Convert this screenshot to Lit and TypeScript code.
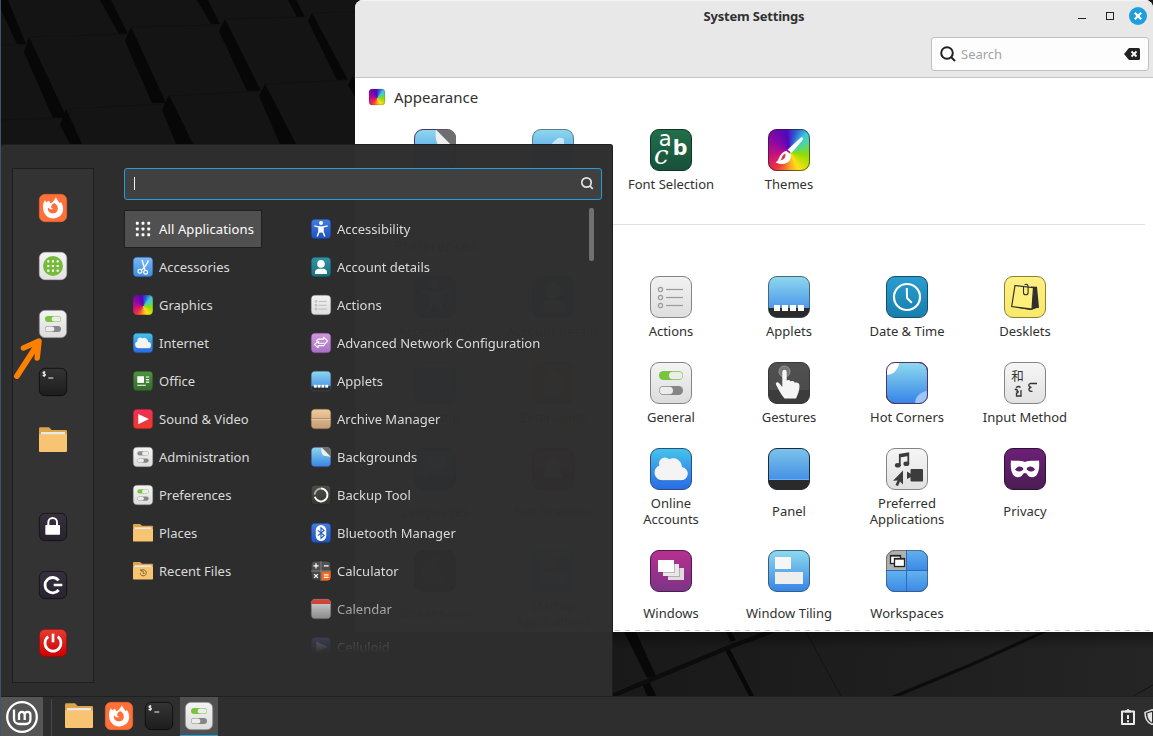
import { LitElement, html, svg, css, nothing } from "lit";
import { customElement, property } from "lit/decorators.js";

/* ---------- icon artwork, drawn on a 42 x 42 canvas ---------- */

const tile = (top: string, bottom: string, edge = "rgba(0,0,0,.45)") => svg`
  <defs><linearGradient id="bg" x1="0" y1="0" x2="0" y2="1">
    <stop offset="0" stop-color=${top}></stop><stop offset="1" stop-color=${bottom}></stop>
  </linearGradient>
  <clipPath id="tile"><rect x="0" y="0" width="42" height="42" rx="9"></rect></clipPath></defs>
  <rect x=".5" y=".5" width="41" height="41" rx="8.5" fill="url(#bg)" stroke=${edge}></rect>`;

const pills = (on: string) => svg`${tile("#f4f4f4", "#dcdcdc", "#858585")}
  <rect x="9" y="9" width="24" height="9" rx="4.5" fill=${on}></rect>
  <rect x="19" y="9.7" width="13.4" height="7.6" rx="3.8" fill="#ececec"></rect>
  <rect x="9" y="24" width="24" height="9" rx="4.5" fill="#858585"></rect>
  <rect x="9.6" y="24.7" width="13.4" height="7.6" rx="3.8" fill="#ececec"></rect>`;

const cloud = svg`<path d="M12 32.2h18.5a6.6 6.6 0 0 0 1.3-13.2a8.6 8.6 0 0 0-12.6-7.8a6 6 0 0 0-9.8 6.3A7.6 7.6 0 0 0 12 32.200z" fill="#f4f4f4"></path>
  <path d="M8 31h26" stroke="#1c56b8" stroke-opacity=".35" transform="translate(0 1.700)"></path>`;

const folder = svg`
  <path d="M0 4a2 2 0 0 1 2-2h13l4 4h21a2 2 0 0 1 2 2v12H0z" fill="#dca54c"></path>
  <rect x="3" y="9" width="36" height="6" fill="#e8e8e8"></rect>
  <path d="M0 12.500q2 0 4 0h34q4 0 4 0V37.500a1.500 1.500 0 0 1-1.500 1.500h-39A1.500 1.500 0 0 1 0 37.500z" fill="#f8c471"></path>`;

const peel = svg`${tile("#8ed8ee", "#3584e4", "#54306a")}
  <g clip-path="url(#tile)"><path d="M22 .5H42V21z" fill="#6e6e6e"></path>
  <path d="M22 1c-1 7 0 12 3 16 5 4 10 3 16.500 3.500z" fill="#f1efec"></path></g>`;

const art: Record<string, unknown> = {
  firefox: svg`${tile("#ff7139", "#ff7139", "#f0652d")}
    <path d="M9 9l1.500 3.500L15 10l2 4c4-1 6-4.500 8.500-9 1 4 4 6 5.500 9l2-2c5 8 4 16-1.500 21-6.500 5-15 5-20.500-.5C5 26.500 4.500 16 9 9z" fill="#fff"></path>
    <path d="M20 15c3-2 4-1 6 1 4 4 3 12-4 13-6 1-10-4-8.500-9 2 3 5 4 8 2-2 0-3-1-3.500-2.500z" fill="#ff7139"></path>`,
  software: svg`${tile("#f4f4f4", "#e2e2e2", "#b8b8b8")}<circle cx="21" cy="21" r="15" fill="#76bb3c"></circle>
    ${[14, 21, 28].map((y) => [14, 21, 28].map((x) => svg`<rect x=${x - 1.6} y=${y - 1.6} width="3.2" height="3.2" rx=".8" fill="#fff"></rect>`))}`,
  general: pills("#78c43c"),
  admin: pills("#8c8c8c"),
  terminal: svg`${tile("#343434", "#1d1d1d", "#050505")}
    <path d="M9.500 6.500c-1-1-3.500-.8-3.500.8 0 2 3.700 1.200 3.700 3 0 1.700-3 1.700-4.200.6M7.800 4.500v9M14 15h7.500" fill="none" stroke="#eee" stroke-width="1.600"></path>`,
  folder,
  recent: svg`${folder}<path d="M16.500 20.500a6.500 6.500 0 1 1-1.500 5M16.500 17v4h4M21.500 21v5h3" fill="none" stroke="#7d6034" stroke-width="2"></path>`,
  lock: svg`${tile("#37303c", "#282230", "#0b090d")}<rect x="9.500" y="18" width="22" height="14.500" rx="1" fill="#fff"></rect>
    <path d="M14 19v-5a6.500 6.500 0 0 1 13 0v5" fill="none" stroke="#fff" stroke-width="3"></path>`,
  logout: svg`${tile("#37303c", "#282230", "#0b090d")}
    <path d="M29.500 14a11.500 11.500 0 1 0 0 14.500" fill="none" stroke="#fff" stroke-width="4.200"></path>
    <path d="M22 21h13" stroke="#fff" stroke-width="3.800"></path>`,
  power: svg`${tile("#e83a32", "#cc0000", "#8e0909")}
    <path d="M14 11.500a12 12 0 1 0 14 0" fill="none" stroke="#fff" stroke-width="4"></path>
    <path d="M21 7v13" stroke="#fff" stroke-width="4"></path>`,
  grid: svg`${[9, 21, 33].map((y) => [9, 21, 33].map((x) => svg`<rect x=${x - 3} y=${y - 3} width="6" height="6" rx="1.500" fill="#fff"></rect>`))}`,
  scissors: svg`${tile("#7ab8f8", "#3e8de0", "#255a96")}
    <path d="M19 6l6 21M32 7c-1 6-4 10-13 20" stroke="#fff" stroke-width="3" fill="none"></path>
    <circle cx="14.500" cy="30" r="4" fill="none" stroke="#fff" stroke-width="2.500"></circle>
    <circle cx="26.500" cy="32" r="4" fill="none" stroke="#fff" stroke-width="2.500"></circle>`,
  rainbow: svg`<rect x=".5" y=".5" width="41" height="41" rx="8.500" fill="none" stroke="#333" stroke-opacity=".6"></rect>`,
  themes: svg`<rect x=".5" y=".5" width="41" height="41" rx="8.500" fill="none" stroke="#222" stroke-opacity=".65"></rect>
    <path d="M34.500 8.500c1 .8.500 2-.5 3.200L23.500 24l-4-3.200L32 9.300c.9-.8 1.800-1.300 2.500-.8z" fill="#fff"></path>
    <path d="M18.300 21.700l4.400 3.500c1.200 4.500-1.500 9.500-8.500 9.800-2.500.1-4.700-.6-6.700-1.800 4.500-1 2.500-9 10.800-11.500z" fill="#fff"></path>
    <path d="M12.500 31.500c1.500-1.800 1.200-5.300 4.700-7 .8 3.500-.7 6-4.700 7z" fill="#e03050"></path>`,
  cloud: svg`${tile("#45c4ea", "#2a6ae6", "#2a5080")}${cloud}`,
  office: svg`${tile("#4f9440", "#356b2b", "#21431c")}<rect x="9" y="11" width="14" height="14" fill="#fff"></rect>
    <path d="M27 12.500h7M27 18h7M27 23.500h7M9 30h18" stroke="#fff" stroke-width="2.400"></path>`,
  play: svg`${tile("#ee2f5b", "#ee3b2b", "#8e1c20")}<path d="M11 10.500l22.500 10.700L11 32z" fill="#fff"></path>`,
  access: svg`${tile("#437de0", "#1f52be", "#13357c")}<circle cx="21" cy="8.500" r="4.200" fill="#fff"></circle>
    <path d="M7 14.500l10 2.500v9l-4 11M35 14.500L25 17v9l4 11" fill="none" stroke="#fff" stroke-width="3"></path><path d="M16 15.500h10v13H16z" fill="#fff"></path>`,
  account: svg`${tile("#2f95a2", "#1c6d80", "#124a56")}<circle cx="21" cy="14.500" r="8" fill="#fff"></circle>
    <path d="M8.500 35.500v-4c0-4.500 4-6.500 8-7h9c4 .5 8 2.500 8 7v4z" fill="#fff"></path>`,
  actions: svg`${tile("#f2f2f2", "#dedede", "#858585")}
    ${[13.5, 21.5, 29.5].map((y) => svg`<circle cx="10.500" cy=${y} r="2.100" fill="none" stroke="#9a9a9a" stroke-width="1.200"></circle>
    <path d="M16 ${y}H33" stroke="#9a9a9a" stroke-width="1.200"></path>`)}`,
  network: svg`${tile("#cf9ae0", "#a970c4", "#7a4a92")}
    <path d="M7 24l9-6.500v4h12M35 16l-9-7v4H15.500l-5 4.500M7 24l8 7v-4.500h11.500L35 16" fill="none" stroke="#fff" stroke-width="2.400" stroke-linejoin="round"></path>`,
  applets: svg`${tile("#8ed8ee", "#3b86e8", "#4a6578")}
    <path d="M.5 32h41v1a8.500 8.500 0 0 1-8.500 8.500H9A8.500 8.500 0 0 1 .5 33z" fill="#2a2a2a"></path>
    ${[6, 14, 22, 30].map((x) => svg`<rect x=${x} y="29" width="6" height="6" fill="#fff"></rect>`)}`,
  archive: svg`${tile("#f0cb9c", "#c59c74", "#8d6b4a")}<path d="M1 20.500h40" stroke="#8f6f50" stroke-width="1.500"></path><path d="M1 22.200h40" stroke="#f5dcb8" stroke-width="1.500"></path>`,
  peel,
  effects: svg`${tile("#8ed8ee", "#3584e4", "#5b7d90")}<path d="M18 17q4-5 8-8 3-1 6 1v8z" fill="#fff" opacity=".6"></path>`,
  backup: svg`${tile("#4b4e47", "#363933", "#1c1e1a")}
    <path d="M21 7.500a13.500 13.500 0 1 1-13 17" fill="none" stroke="#fff" stroke-width="4"></path>
    <path d="M21 7.500a13.500 13.500 0 0 0-13.500 13" fill="none" stroke="#aaa" stroke-width="4"></path>`,
  bluetooth: svg`${tile("#437de0", "#1f52be", "#13357c")}<rect x="10" y="4" width="22" height="34" rx="11" fill="#fff"></rect>
    <path d="M14.500 15.500l13 11-6.500 5.500V10l6.500 5.500-13 11" fill="none" stroke="#2a60cc" stroke-width="2.600"></path>`,
  calculator: svg`${tile("#555", "#3e3e3e", "#1c1c1c")}
    <path d="M22 22h19.500v11a8.500 8.500 0 0 1-8.500 8.500H22z" fill="#f26a1c"></path>
    <path d="M21 0v42M0 21h42" stroke="#9a9a9a" stroke-width="1.500"></path>
    <path d="M5 10h11M10.500 4.500v11M27 10h10M6.500 27.500l8 8M14.500 27.500l-8 8M27 29h10M27 34.500h10" stroke="#fff" stroke-width="2.600"></path>`,
  calendar: svg`${tile("#f4f4f4", "#d8d8d8", "#777")}<path d="M.5 9.500V9A8.500 8.500 0 0 1 9 .5h24A8.500 8.500 0 0 1 41.500 9v1.500H.5z" fill="#f04a3e"></path>`,
  celluloid: svg`${tile("#5070b8", "#683a98", "#223")}<path d="M11 9.500L35 21 11 32.500z" fill="#e8e8f0"></path>`,
  fonts: svg`${tile("#20704a", "#18503a", "#123626")}
    <text x="8.800" y="17" font-size="21" class="sans" fill="#fff">a</text>
    <text x="22.800" y="25.800" font-size="20.500" class="sans bold" fill="#fff">b</text>
    <text x="4" y="35" font-size="26" class="ital" fill="#fff">c</text>`,
  clock: svg`${tile("#2a9dd0", "#167fae", "#164e6a")}<circle cx="21" cy="21" r="13" fill="none" stroke="#fff" stroke-width="2.200"></circle>
    <path d="M20.800 12l.2 10 4.800 4.800" fill="none" stroke="#fff" stroke-width="2" stroke-linejoin="round"></path>`,
  desklets: svg`${tile("#fff085", "#f8e86a", "#8b8238")}
    <path d="M27 10.500l6 .2 2 21-7 1z" fill="#303030"></path><path d="M12 31.500l14 2.500 6-1.500-10-3z" fill="#303030"></path>
    <path d="M11 9.500l18.500 2.200L28 33.200 7.700 30.500z" fill="#fff07a" stroke="#303030" stroke-width="1.200"></path>
    <path d="M19.500 11v5.500a2.300 2.300 0 0 0 4.600 0v-6.500a2 2 0 0 0-3.500-1" fill="none" stroke="#303030" stroke-width="1.100"></path>`,
  gestures: svg`${tile("#505050", "#4a4a4a", "#383838")}
    <path d="M.5 28h41v5a8.500 8.500 0 0 1-8.500 8.500H9A8.500 8.500 0 0 1 .5 33z" fill="#3c3c3c"></path>
    <circle cx="16.500" cy="9.500" r="5.500" fill="#777" stroke="#999"></circle>
    <path d="M14.300 10a2.200 2.200 0 0 1 4.400 0v8.500c1.500-1 3.500-.5 4 1 1.500-.8 3.500-.3 4 1.300 2-.7 4.800 0 4.800 3 0 5-1.500 8-3.500 12.800H16.500C12.500 32 10 26.500 8 22.500c-.7-2 1.500-2.800 3-1.500l3.300 4z" fill="#f5f5f5"></path>`,
  corners: svg`${tile("#8edaee", "#3584e8", "#54306a")}<g clip-path="url(#tile)"><circle r="13" fill="#fff"></circle><circle cx="42" cy="42" r="13" fill="#9cc6f6"></circle></g>
    <rect x=".5" y=".5" width="41" height="41" rx="8.500" fill="none" stroke="#54306a"></rect>`,
  input: svg`${tile("#f6f6f6", "#e2e2e2", "#858585")}
    <text x="7.200" y="18.500" font-size="12.500" class="cjk" fill="#333">和</text>
    <path d="M11 28c1.500-2 3 0 1.500 1.500 3-1 1.500 2 0 1.500v3h4.500v-6M12 25.500c2-1.500 3-1.500 4.500 0M26 21.500h7M26 21.500c-2 1-1.500 3.800 1.500 3.800-3.800.4-3.500 4.700 1 4" fill="none" stroke="#333" stroke-width="1.300"></path>`,
  panel: svg`${tile("#7cc4ea", "#3580e6", "#1e2c3a")}
    <path d="M.5 32h41v1a8.500 8.500 0 0 1-8.500 8.500H9A8.500 8.500 0 0 1 .5 33z" fill="#2a2a2a"></path><path d="M1 31.500h40" stroke="#66b0f8"></path>`,
  preferred: svg`${tile("#f6f6f6", "#e0e0e0", "#858585")}
    <path d="M13.800 18V6.800l8.500-1.500V16.500M13.800 8.500l8.500-1.500" fill="none" stroke="#3c3c3c" stroke-width="1.800"></path>
    <ellipse cx="11.800" cy="17.300" rx="2.900" ry="2.300" fill="#3c3c3c"></ellipse><ellipse cx="20.300" cy="15.800" rx="2.900" ry="2.300" fill="#3c3c3c"></ellipse>
    <path d="M17 22.500v14l-3-3-2 4.500-2.500-1 2-4.500-4.500.3zM21 23.500l4 2.500v3l-4 2z" fill="#3c3c3c"></path><rect x="24.500" y="21" width="12.500" height="12.500" rx="1" fill="#3c3c3c"></rect>`,
  privacy: svg`${tile("#6e1f78", "#4a1d54", "#2d1233")}
    <path fill-rule="evenodd" d="M7 12.500c5 .8 9-.5 14 1.500 5-2 9-.7 14-1.500.5 5 .3 10-2 14-2.500 4-8 3.500-10-.5-1-1.500-3-1.500-4 0-2 4-7.500 4.500-10 .5-2.300-4-2.500-9-2-14zM11 21.500c2.500 3 7 2.500 8.500-.5-2-3.500-6.500-3-8.500.5zM31 21.500c-2-3.500-6.500-4-8.500-.5 1.500 3 6 3.500 8.500.5z" fill="#fff"></path>`,
  windows: svg`${tile("#b8308e", "#7c3486", "#4a1a50")}
    <rect x="18" y="18" width="16" height="12" fill="#ddd"></rect><path d="M18 26.500h11.500V18" fill="none" stroke="#4a1a50" stroke-opacity=".25"></path>
    <rect x="13" y="14" width="16" height="12" fill="#e8e8e8"></rect><path d="M13 22.500h11.500V14" fill="none" stroke="#4a1a50" stroke-opacity=".25"></path>
    <rect x="8" y="10" width="16" height="12" fill="#fdfdfd"></rect>`,
  tiling: svg`${tile("#8edaee", "#3584e8", "#35607c")}<rect x="7" y="7" width="16" height="12" fill="#f6f6f6"></rect><rect x="7" y="22" width="28" height="12" fill="#eee"></rect>`,
  workspaces: svg`${tile("#5cacee", "#3584e4", "#2c5c90")}
    <defs><linearGradient id="cell" x1="0" y1="0" x2="0" y2="1"><stop offset="0" stop-color="#62b2ee"></stop><stop offset="1" stop-color="#3a88e6"></stop></linearGradient></defs>
    <g clip-path="url(#tile)"><rect x="21" width="21" height="20.500" fill="url(#cell)"></rect><rect y="21" width="21" height="21" fill="url(#cell)"></rect><rect x="21" y="21" width="21" height="21" fill="url(#cell)"></rect>
    <path d="M0 0h20.500v20.500H0z" fill="#b0b0b0"></path>
    <path d="M20.500 0v42M0 20.500h42" stroke="#2c6cb4"></path></g>
    <rect x="4.500" y="5.500" width="10" height="8" fill="#fff" stroke="#222" stroke-width="1.300"></rect><path d="M4 5.800h11" stroke="#222" stroke-width="1.600"></path>
    <rect x="8.500" y="8.500" width="10" height="8" fill="#fff" stroke="#222" stroke-width="1.300"></rect><path d="M8 8.800h11" stroke="#222" stroke-width="1.600"></path>
    <rect x=".5" y=".5" width="41" height="41" rx="8.500" fill="none" stroke="#333" stroke-opacity=".5"></rect>`,
  moon: svg`${tile("#3c3c3c", "#202020", "#111")}<path d="M26 8a14 14 0 1 0 8 20A12 12 0 0 1 26 8z" fill="#777"></path>`,
  desktop: svg`${tile("#8edaee", "#3584e8", "#35607c")}`,
  puzzle: svg`${tile("#f2c060", "#d08030", "#704010")}<path d="M12 14h6a4 4 0 1 1 7 0h6v18H12z" fill="#fff"></path>`,
  flag: svg`${tile("#5cacee", "#2c6cc8", "#234")}<path d="M12 8v26M13 9h18v12H13z" fill="#fff" stroke="#fff"></path>`,
  bell: svg`${tile("#d85a5a", "#a03030", "#511")}<path d="M10 30h22c-4-4-3-8-4-14a7 7 0 0 0-14 0c-1 6 0 10-4 14z" fill="#fff"></path>`,
};

@customElement("app-icon")
export class AppIcon extends LitElement {
  @property() name = "";
  @property({ type: Number }) size = 42;

  static styles = css`
    :host { display: block; flex: none; line-height: 0; }
    svg { display: block; overflow: visible; }
    .spectrum {
      border-radius: 21%;
      background: conic-gradient(from -8deg at 52% 56%, #5206bc 0deg, #2f62d0 25deg, #3ccbe0 50deg, #66d860 82deg,
        #92dc00 108deg, #ffe018 160deg, #f8a028 190deg, #f0343c 228deg, #c8107e 270deg, #8a08a4 315deg, #5206bc 360deg);
    }
    .sans { font-family: "DejaVu Sans", sans-serif; }
    .bold { font-weight: 700; }
    .ital { font-family: "DejaVu Serif", serif; font-style: italic; }
    .cjk { font-family: "Noto Sans CJK SC", sans-serif; }
  `;

  render() {
    const spectrum = this.name === "rainbow" || this.name === "themes";
    return html`<svg class=${spectrum ? "spectrum" : "plain"} width=${this.size} height=${this.size} viewBox="0 0 42 42">${art[this.name] ?? nothing}</svg>`;
  }
}

/* ---------- data ---------- */

type Item = [icon: string, label: string];

const favourites: Item[] = [["firefox", "Firefox"], ["software", "Software Manager"], ["general", "System Settings"], ["terminal", "Terminal"], ["folder", "Files"]];
const session: Item[] = [["lock", "Lock Screen"], ["logout", "Logout"], ["power", "Quit"]];

const categories: Item[] = [
  ["grid", "All Applications"], ["scissors", "Accessories"], ["rainbow", "Graphics"], ["cloud", "Internet"], ["office", "Office"],
  ["play", "Sound & Video"], ["admin", "Administration"], ["general", "Preferences"], ["folder", "Places"], ["recent", "Recent Files"],
];

const applications: Item[] = [
  ["access", "Accessibility"], ["account", "Account details"], ["actions", "Actions"], ["network", "Advanced Network Configuration"],
  ["applets", "Applets"], ["archive", "Archive Manager"], ["peel", "Backgrounds"], ["backup", "Backup Tool"],
  ["bluetooth", "Bluetooth Manager"], ["calculator", "Calculator"], ["calendar", "Calendar"], ["celluloid", "Celluloid"],
];

const appearance: Item[] = [["peel", "Backgrounds"], ["effects", "Effects"], ["fonts", "Font Selection"], ["themes", "Themes"]];

const preferences: Item[] = [
  ["access", "Accessibility"], ["account", "Account details"], ["actions", "Actions"], ["applets", "Applets"], ["clock", "Date & Time"], ["desklets", "Desklets"],
  ["desktop", "Desktop"], ["puzzle", "Extensions"], ["general", "General"], ["gestures", "Gestures"], ["corners", "Hot Corners"], ["input", "Input Method"],
  ["flag", "Languages"], ["bell", "Notifications"], ["cloud", "Online\nAccounts"], ["panel", "Panel"], ["preferred", "Preferred\nApplications"], ["privacy", "Privacy"],
  ["moon", "Screensaver"], ["tiling", "Startup\nApplications"], ["windows", "Windows"], ["tiling", "Window Tiling"], ["workspaces", "Workspaces"],
];

/* ---------- settings window ---------- */

@customElement("settings-window")
export class SettingsWindow extends LitElement {
  static styles = css`
    :host { display: flex; flex-direction: column; background: #fff; color: #303030; border-radius: 8px 8px 0 0; overflow: hidden; }
    header { box-sizing: border-box; height: 78px; background: #e8e8e8; border-bottom: 1px solid #c4c4c4; box-shadow: inset 0 1px #f3f3f3; flex: none; }
    .title { display: grid; grid-template-columns: 1fr auto 1fr; align-items: center; height: 32px; }
    h1 { grid-column: 2; margin: 0; font-size: 13px; line-height: 32px; font-weight: 700; letter-spacing: -.2px; }
    .controls { justify-self: end; display: flex; align-items: center; padding-right: 6px; }
    .tools { display: flex; justify-content: flex-end; padding: 5px 4px 0 0; }
    .search { box-sizing: border-box; width: 218px; height: 34px; border: 1px solid #c0c0c0; border-radius: 3px; background: #fdfdfd; display: flex; align-items: center; padding: 0 8px; color: #a4a4a4; font-size: 13px; }
    .search span { flex: 1; padding-left: 5px; }
    h2 { margin: 0; display: flex; align-items: center; gap: 9px; height: 20px; padding-left: 14px; font-size: 15px; font-weight: 400; }
    .appearance { padding-top: 9px; height: 147px; box-sizing: border-box; border-bottom: 1px solid #e2e2e2; margin-right: 8px; flex: none; }
    .rows { display: grid; grid-template-columns: repeat(6, 118px); row-gap: 23px; padding-left: 21px; }
    .appearance .rows { padding-top: 22px; }
    .preferences { padding-top: 10px; }
    .preferences .rows { padding-top: 21px; }
    .item { display: flex; flex-direction: column; align-items: center; gap: 5px; }
    .label { flex: 1; display: flex; align-items: center; text-align: center; white-space: pre; font-size: 13px; line-height: 16px; }
    .edge { flex: none; margin: auto 0 1px; height: 1px; background: repeating-linear-gradient(90deg, #ccc 0 5px, #fff 5px 10px); }
  `;

  private item = ([icon, label]: Item) => html`<div class="item"><app-icon name=${icon}></app-icon><div class="label">${label}</div></div>`;

  render() {
    return html`
      <header>
        <div class="title">
          <h1>System Settings</h1>
          <div class="controls">
            <svg width="69" height="20" viewBox="0 0 69 20">
              <path d="M0 12.500h8" stroke="#222"></path><rect x="28.500" y="6.500" width="7" height="7" fill="none" stroke="#222"></rect>
              <circle cx="60" cy="10" r="9" fill="#1f9ede"></circle><path d="M56.800 6.800l6.400 6.400m0-6.400l-6.400 6.400" stroke="#fff" stroke-width="2.200"></path>
            </svg>
          </div>
        </div>
        <div class="tools"><div class="search">
          <svg width="16" height="16" viewBox="0 0 16 16" fill="none" stroke="#222" stroke-width="2"><circle cx="7" cy="7" r="5.800"></circle><path d="M11 11l4 4"></path></svg>
          <span>Search</span>
          <svg width="16" height="12" viewBox="0 0 16 12"><path d="M5 0h9.500A1.500 1.500 0 0 1 16 1.500v9A1.500 1.500 0 0 1 14.500 12H5L0 6z" fill="#222"></path><path d="M7.500 3.500l5 5m0-5l-5 5" stroke="#fff" stroke-width="1.800"></path></svg>
        </div></div>
      </header>
      <section class="appearance"><h2><app-icon name="rainbow" size="16"></app-icon>Appearance</h2><div class="rows">${appearance.map(this.item)}</div></section>
      <section class="preferences"><h2><app-icon name="general" size="16"></app-icon>Preferences</h2><div class="rows">${preferences.map(this.item)}</div></section>
      <div class="edge"></div>`;
  }
}

/* ---------- start menu ---------- */

@customElement("start-menu")
export class StartMenu extends LitElement {
  static styles = css`
    :host { box-sizing: border-box; display: flex; padding: 23px 10px 13px 11px; background: rgba(46, 46, 46, .99); border: 1px solid #1e1e1e; border-left: 0; border-bottom: 0; border-radius: 3px 3px 0 0; color: #dadada; font-size: 13px; }
    nav { box-sizing: border-box; width: 82px; border: 1px solid #1f1f1f; background: #333; display: flex; flex-direction: column; justify-content: space-between; align-items: center; padding: 25px 0; }
    .group { display: flex; flex-direction: column; gap: 30px; }
    .main { flex: 1; display: flex; flex-direction: column; padding-left: 30px; }
    .search { box-sizing: border-box; height: 32px; border: 1px solid #1f9ede; border-radius: 3px; background: #404040; display: flex; justify-content: space-between; align-items: center; padding: 0 7px 2px 9px; }
    .caret { width: 1px; height: 13px; background: #eee; }
    .columns { display: flex; flex: 1; padding-top: 10px; }
    .categories { width: 178px; display: flex; flex-direction: column; align-items: flex-start; }
    .row { box-sizing: border-box; height: 38px; display: flex; align-items: center; gap: 6px; padding: 0 7px 0 8px; border: 1px solid transparent; white-space: nowrap; }
    .selected { width: 138px; background: #505050; border-color: #1f1f1f; color: #fff; letter-spacing: .12px; }
    .apps { width: 286px; height: 444px; overflow: hidden; -webkit-mask-image: linear-gradient(#000 382px, rgba(0,0,0,.7) 399px, rgba(0,0,0,.24) 430px, transparent 444px); mask-image: linear-gradient(#000 382px, rgba(0,0,0,.7) 399px, rgba(0,0,0,.24) 430px, transparent 444px); }
    .bar { width: 5px; height: 53px; margin: -2px 0 0 1px; border-radius: 2px; background: #707070; }
  `;

  private row = ([icon, label]: Item, selected = false) => html`
    <div class="row ${selected ? "selected" : ""}"><app-icon name=${icon} size="20"></app-icon><span>${label}</span></div>`;

  render() {
    return html`
      <nav>
        <div class="group">${favourites.map(([i, l]) => html`<app-icon name=${i} size="28" aria-label=${l}></app-icon>`)}</div>
        <div class="group">${session.map(([i, l]) => html`<app-icon name=${i} size="28" aria-label=${l}></app-icon>`)}</div>
      </nav>
      <div class="main">
        <div class="search"><div class="caret"></div>
          <svg width="14" height="14" viewBox="0 0 14 14" fill="none" stroke="#e4e4e4" stroke-width="1.700"><circle cx="6.500" cy="6.500" r="4.700"></circle><path d="M9.800 9.800l3 3"></path></svg>
        </div>
        <div class="columns">
          <div class="categories">${categories.map((c, i) => this.row(c, i === 0))}</div>
          <div class="apps">${applications.map((a) => this.row(a))}</div>
          <div class="bar"></div>
        </div>
      </div>`;
  }
}

/* ---------- bottom panel ---------- */

@customElement("task-bar")
export class TaskBar extends LitElement {
  static styles = css`
    :host { box-sizing: border-box; display: flex; align-items: stretch; background: #2e2e2e; border-top: 1px solid #1f1f1f; }
    .menu { width: 42px; background: #555; display: flex; align-items: center; justify-content: center; }
    .split { width: 1px; margin: 2px 7px 0 8px; background: #484848; }
    .task { box-sizing: border-box; width: 40px; display: flex; align-items: center; justify-content: center; padding-bottom: 1px; }
    .active { width: 38px; margin-left: 1px; background: #505050; box-shadow: inset 0 -1px #1f9ede; }
    .tray { margin-left: auto; width: 33px; overflow: hidden; display: flex; align-items: center; gap: 8px; }
    .tray svg { flex: none; }
  `;

  render() {
    return html`
      <div class="menu"><svg width="32" height="32" viewBox="0 0 32 32" fill="none" stroke="#fff">
        <circle cx="16" cy="16" r="14.800" stroke-width="2.300"></circle>
        <path d="M8 8.500V18a5 5 0 0 0 5 5h7a4.400 4.400 0 0 0 4.400-4.400V13.800a2.850 2.850 0 0 0-5.700 0v5.200M18.700 13.800a2.850 2.850 0 0 0-5.700 0v5.200" stroke-width="2.300"></path></svg></div>
      <div class="split"></div>
      <div class="task"><app-icon name="folder" size="28"></app-icon></div>
      <div class="task"><app-icon name="firefox" size="28"></app-icon></div>
      <div class="task"><app-icon name="terminal" size="28"></app-icon></div>
      <div class="task active"><app-icon name="general" size="28"></app-icon></div>
      <div class="tray">
        <svg width="16" height="18" viewBox="0 0 16 18"><path d="M2 3.500h12v12.500H2z" fill="none" stroke="#eaeaea" stroke-width="2" stroke-linejoin="round"></path><path d="M5 4.500V2.500h1.500a1.500 1.500 0 0 1 3 0H11v2z" fill="#eaeaea"></path><path d="M8 7v4M8 12.200v2" stroke="#eaeaea" stroke-width="2"></path></svg>
        <svg width="16" height="16" viewBox="0 0 16 16"><path d="M8 .8l7 2.600c0 6-2 10-7 12-5-2-7-6-7-12z" fill="none" stroke="#e4e4e4" stroke-width="1.500"></path><path d="M8 3v10.500C5 12 3.500 9 3.300 4.600z" fill="#e4e4e4"></path></svg>
      </div>`;
  }
}

/* ---------- desktop ---------- */

@customElement("app-root")
export class AppRoot extends LitElement {
  static styles = css`
    :host { display: block; position: relative; width: 1153px; height: 736px; overflow: hidden; background: #151515; font-family: "Noto Sans", "Open Sans", sans-serif; }
    .wallpaper, settings-window, start-menu, task-bar, .pointer { position: absolute; }
    .wallpaper { left: 0; top: 0; }
    settings-window { left: 355px; top: 0; width: 798px; height: 632px; }
    start-menu { left: 1px; top: 144px; width: 612px; height: 552px; }
    task-bar { left: 1px; right: 0; top: 696px; height: 40px; }
    .pointer { left: 10px; top: 334px; }
  `;

  render() {
    return html`
      <svg class="wallpaper" width="1153" height="736" viewBox="0 0 1153 736">
        <defs><linearGradient id="glow" x1="613" x2="1153" y1="0" y2="0" gradientUnits="userSpaceOnUse"><stop offset="0" stop-color="#191919"></stop><stop offset=".6" stop-color="#1f1f1f"></stop><stop offset="1" stop-color="#252525"></stop></linearGradient>
        <linearGradient id="shade" x1="0" x2="0" y1="632" y2="650" gradientUnits="userSpaceOnUse"><stop offset="0" stop-color="#000" stop-opacity=".35"></stop><stop offset="1" stop-color="#000" stop-opacity="0"></stop></linearGradient></defs>
        <rect width="1153" height="736" fill="#141414"></rect>
        <g fill="#070707">
          <path d="M1 0h7l18 44H17L1 10zM100 0h11l17 34h-9zM197 0h11l12 24h-9zM288 0h8l9 17h-8z"></path>
          <path d="M29 37l38 81h-14L24 52zM131 27l35 76h-14L125 41zM225 19l36 72h-14L219 31zM312 13l36 67h-11L308 21zM353 76l2 4v17l-7-12z"></path>
          <path d="M66 109l16 35H70L60 125zM169 95l24 49h-17L162 110zM265 84l31 60h-16L259 96z"></path>
        </g>
        <g stroke="#111" fill="none"><path d="M1 45h24M29 37l99-3M1 120l59-2M66 109l98-5M131 27l90-2M169 96l92-5M225 19l80-2M265 84l83-4M312 13l43-1"></path></g>
        <rect x="613" y="632" width="540" height="66" fill="url(#glow)"></rect>
        <g fill="#080808"><path d="M624 632h12l20 44-9 2zM642 683l7-2 9 18h-10zM726 632h5l5 8-5 2zM725 650l5-1 25 49h-5z"></path></g>
        <path d="M613 695.500L727 648 775 630" stroke="#0c0c0c" stroke-width="4.500" fill="none"></path>
        <path d="M886 700L968 666 1048 630" stroke="#0c0c0c" stroke-width="3" fill="none"></path>
        <path d="M806 632l36 66M1126 700l27-15" stroke="#131313" fill="none"></path>
        <rect x="613" y="632" width="540" height="20" fill="url(#shade)"></rect>
        <rect width="1" height="736" fill="#43536b"></rect>
      </svg>
      <settings-window></settings-window>
      <start-menu></start-menu>
      <task-bar></task-bar>
      <svg class="pointer" width="36" height="48" viewBox="0 0 36 48" fill="none" stroke="#ff8000" stroke-linecap="round" stroke-linejoin="round">
        <path d="M7 42L27 11" stroke-width="5.800"></path><path d="M13.500 14L29 7l-1.800 17" stroke-width="5.500"></path></svg>`;
  }
}
